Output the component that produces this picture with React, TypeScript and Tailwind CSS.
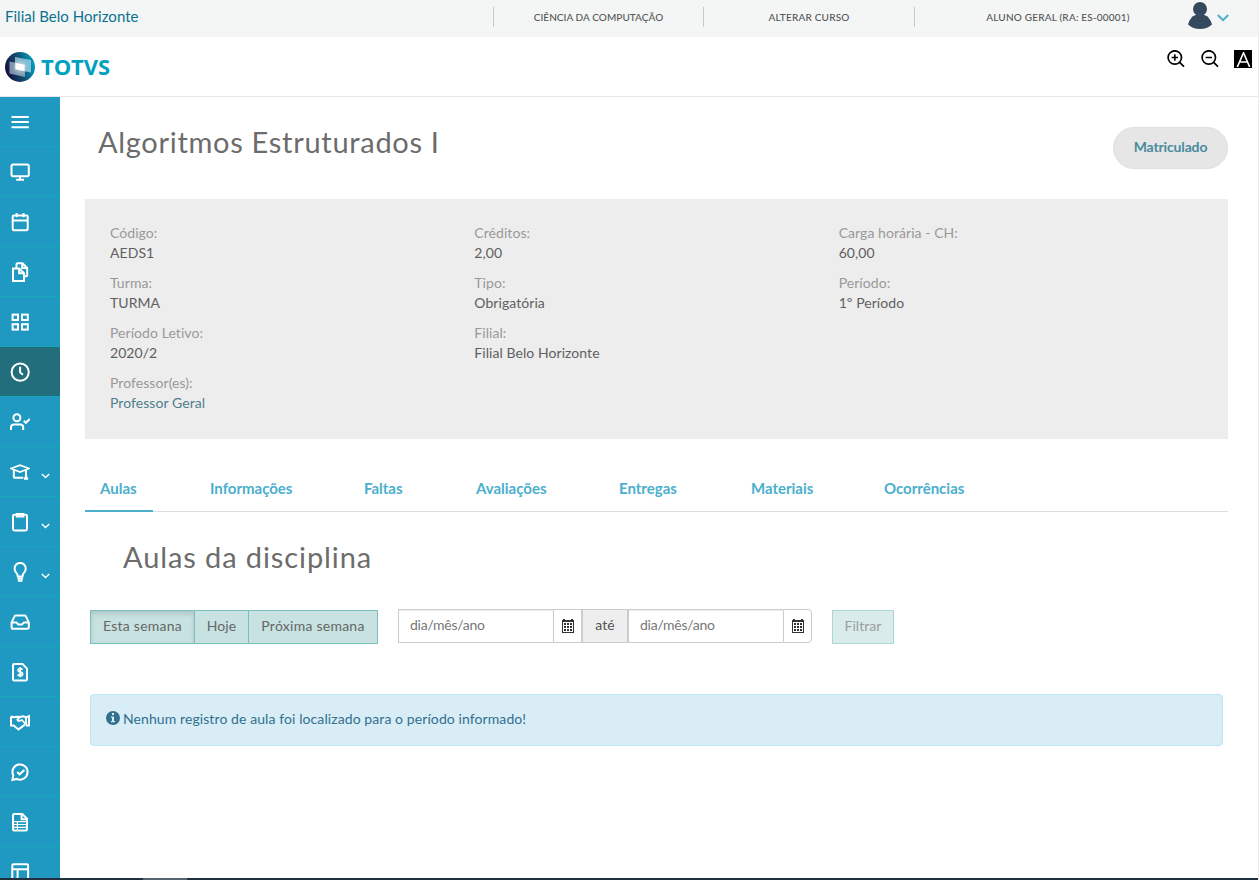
import { useState } from 'react';
import type { ReactNode } from 'react';

type MenuItem = { id: string; icon: ReactNode; expandable?: boolean };

const menuItems: MenuItem[] = [
  { id: 'menu', icon: <path d="M1.5 5h17.3M1.5 10h17.3M1.5 15.2h17.3" /> },
  {
    id: 'mural',
    icon: (
      <>
        <rect x="1.5" y="2.6" width="17.3" height="11.6" rx="1.6" />
        <path d="M10 14v3M6.2 17.7h7.8" />
      </>
    ),
  },
  {
    id: 'calendar',
    icon: (
      <>
        <rect x="2.7" y="3.4" width="15" height="14.8" rx="1.2" />
        <path d="M2.7 8.4h15M6.7 1v4.2M13.5 1v4.2" />
      </>
    ),
  },
  {
    id: 'files',
    icon: (
      <>
        <path d="M3 6.5h6.2l4.8 4.6v7.8H3z" />
        <path d="M9.2 6.5v4.8h4.8M6.5 6.2V2.2q0-1 1-1h5l4.700 4.600v7.400q0 1-1 1h-2M12.200 1.400v4.600h4.800" />
      </>
    ),
  },
  {
    id: 'grid',
    icon: (
      <>
        <rect x="2.6" y="2.6" width="5.4" height="5.4" />
        <rect x="12" y="2.6" width="5.8" height="5.4" />
        <rect x="2.6" y="12.2" width="5.4" height="5.4" />
        <rect x="12" y="12.2" width="5.8" height="5.4" />
      </>
    ),
  },
  {
    id: 'clock',
    icon: (
      <>
        <circle cx="10.2" cy="10.1" r="8.6" />
        <path d="M10.1 4.8v5.6l2.8 2.4" />
      </>
    ),
  },
  {
    id: 'attendance',
    icon: (
      <>
        <circle cx="6.9" cy="5.8" r="3.5" />
        <path d="M1 18v-2.6q0-2.8 2.8-2.8h6.6q2.8 0 2.8 2.8V18M13.8 8.8l2 2 4-3.8" />
      </>
    ),
  },
  {
    id: 'academic',
    expandable: true,
    icon: (
      <>
        <path d="M1 6.500 10 3.200l9 3.300L10 10z" strokeWidth="1.800" />
        <path d="M3.800 8v6.400q0 1.400 1.600 1.400h8M16 7.600v7" />
        <path d="M14 16.600h4.200M16 13.600v3" strokeWidth="2.400" />
      </>
    ),
  },
  {
    id: 'clipboard',
    expandable: true,
    icon: (
      <>
        <rect x="3" y="2.8" width="14" height="15.6" rx="1.4" />
        <path d="M6.8 2v2.400h6.600V2z" />
      </>
    ),
  },
  {
    id: 'ideas',
    expandable: true,
    icon: (
      <>
        <path d="M7.800 14.400q0-2.200-1.800-4Q4.600 8.800 4.600 6.500A5.500 5.500 0 0 1 15.700 6.500q0 2.300-1.400 3.900-1.800 1.800-1.800 4z" />
        <path d="M7.400 16.600h5.600M7.900 18.800h4.600" />
      </>
    ),
  },
  {
    id: 'inbox',
    icon: (
      <>
        <path d="M1.600 10.400 4.500 4.400q.4-.9 1.300-.9h8.800q.9 0 1.300.9l2.900 6v5q0 1.400-1.400 1.400H3q-1.400 0-1.400-1.400z" />
        <path d="M1.600 10.400h4.800l1.800 2h3.900l1.800-2h4.900" />
      </>
    ),
  },
  {
    id: 'finance',
    icon: (
      <>
        <path d="M4.200 2h8.300l4.500 4.600v10.600q0 1.300-1.300 1.300H4.200q-1.200 0-1.200-1.300V3.200Q3 2 4.200 2z" />
        <path d="M12.500 7.600q-.6-1-2.300-1-2.200 0-2.200 1.700 0 1.400 2.200 1.800 2.400.4 2.400 1.900 0 1.700-2.300 1.700-1.900 0-2.700-1.200M10.200 5v10.200" strokeWidth="1.700" />
      </>
    ),
  },
  {
    id: 'agreements',
    icon: (
      <>
        <path d="M1 4.500l3 .8 3-.6 3 .2 3-.6 3.200 1L19 4v9.400h-3M1 4.500v8.900h2.600l4.900 4 6.400-4.800M16 5.300v7.300" />
        <path d="M10.200 5 7.200 7.800q.8 1.900 3 1l1.600-.9 4.300 4.500" strokeWidth="1.600" />
      </>
    ),
  },
  {
    id: 'services',
    icon: (
      <>
        <path d="M2.400 17.900 3.300 13.600A7.600 7.600 0 1 1 6.800 16.900z" />
        <path d="M7.200 10l2.400 2.300 4.800-4.400" />
      </>
    ),
  },
  {
    id: 'reports',
    icon: (
      <>
        <path d="M4.200 2h8l4.800 4.600v10.600q0 1.300-1.300 1.300H4.200q-1.200 0-1.200-1.300V3.200Q3 2 4.200 2z" />
        <path d="M11.600 2v5.200H17" />
        <path d="M4 9.700h12M4 12.500h12M4 15.300h12M7.400 9v8.600" strokeWidth="1.200" />
      </>
    ),
  },
  {
    id: 'layout',
    icon: (
      <>
        <rect x="2.300" y="2.300" width="15.800" height="15.800" rx="1.200" />
        <path d="M2.300 7.200h15.800M7.600 7.200v10.900" />
      </>
    ),
  },
];

const tabs = [
  { label: 'Aulas', width: 'w-[110px]' },
  { label: 'Informações', width: 'w-[154px]' },
  { label: 'Faltas', width: 'w-[112px]' },
  { label: 'Avaliações', width: 'w-[143px]' },
  { label: 'Entregas', width: 'w-[132px]' },
  { label: 'Materiais', width: 'w-[133px]' },
  { label: 'Ocorrências', width: 'w-[110px]' },
];

const infoColumns = [
  [
    ['Código:', 'AEDS1'],
    ['Turma:', 'TURMA'],
    ['Período Letivo:', '2020/2'],
    ['Professor(es):', 'Professor Geral'],
  ],
  [
    ['Créditos:', '2,00'],
    ['Tipo:', 'Obrigatória'],
    ['Filial:', 'Filial Belo Horizonte'],
  ],
  [
    ['Carga horária - CH:', '60,00'],
    ['Período:', '1º Período'],
  ],
];

function Logo() {
  return (
    <svg className="h-[30px] w-[30px]" viewBox="0 0 30 30">
      <defs>
        <linearGradient id="ball" x1="0" y1="0.6" x2="1" y2="0.3">
          <stop offset="0" stopColor="#150f3c" />
          <stop offset="0.45" stopColor="#14466b" />
          <stop offset="1" stopColor="#00a5c4" />
        </linearGradient>
        <radialGradient id="glow" cx="0.5" cy="0.5" r="0.5">
          <stop offset="0" stopColor="#fff" />
          <stop offset="1" stopColor="#fff" stopOpacity="0" />
        </radialGradient>
      </defs>
      <circle cx="15" cy="15" r="15" fill="url(#ball)" />
      <path d="M10 5 26 8V20.500L10 17.500z" fill="#b5dcea" opacity="0.7" />
      <path d="M4.500 9.500 20 12.500V25L4.500 21.500z" fill="#b9c8dc" opacity="0.65" />
      <path d="M10.500 11 19.500 12.800V19L10.500 17.200z" fill="#fff" />
      <circle cx="15" cy="15" r="8" fill="url(#glow)" opacity="0.6" />
    </svg>
  );
}

function ZoomIcon({ plus }: { plus?: boolean }) {
  return (
    <svg className="h-[18px] w-[18px]" viewBox="0 0 18 18" fill="none" stroke="#000" strokeWidth="1.7">
      <circle cx="7.800" cy="7.500" r="6.700" />
      <path d="M12.600 12.300 17 16.700M4.600 7.500h6.400" />
      {plus && <path d="M7.800 4.300v6.400" />}
    </svg>
  );
}

function CalendarButton({ last }: { last?: boolean }) {
  return (
    <button
      className={
        'flex h-[34px] w-[29px] items-center justify-center border border-[#ccc] bg-white ' +
        (last ? 'rounded-r' : '')
      }
    >
      <svg className="h-[14px] w-3" viewBox="0 0 12 14" shapeRendering="crispEdges">
        <path d="M0 1h1V0h2v1h6V0h2v1h1v13H0z" fill="#333" />
        <path d="M1 3h10v10H1z" fill="#fff" />
        <path
          d="M2 4h2v2H2zM5 4h2v2H5zM8 4h2v2H8zM2 7h2v2H2zM5 7h2v2H5zM8 7h2v2H8zM2 10h2v2H2zM5 10h2v2H5zM8 10h2v2H8z"
          fill="#333"
        />
      </svg>
    </button>
  );
}

export default function App() {
  const [activeTab, setActiveTab] = useState('Aulas');

  return (
    <div className="flex h-[880px] flex-col overflow-hidden border-r border-[#ececec] bg-white font-['Lato',sans-serif] text-sm tracking-[0.06px] text-[#666]">
      {/* Top bar */}
      <div className="flex h-[37px] shrink-0 items-start bg-[#f4f6f6]">
        <div className="w-[493px] pt-1 pl-[5px] text-[15px] leading-6 tracking-[0.03px] text-[#0c7190]">Filial Belo Horizonte</div>
        <div className="flex pt-[7px] text-center text-[10px] leading-5 font-medium text-[#555]">
          <div className="w-[210px] border-l border-[#c8c8c8]">CIÊNCIA DA COMPUTAÇÃO</div>
          <div className="w-[211px] border-l border-[#c8c8c8] tracking-[0.2px]">ALTERAR CURSO</div>
          <div className="w-[274px] border-l border-[#c8c8c8] pl-[13px] tracking-[0.2px]">ALUNO GERAL (RA: ES-00001)</div>
        </div>
        <div className="flex items-center pt-[2px]">
          <svg className="h-[27px] w-6" viewBox="0 0 24 27" fill="#34495e">
            <circle cx="12" cy="7" r="7" />
            <path d="M0 22.500Q2 15 7.500 13h9Q22 15 24 22.500 19 27 12 27T0 22.500z" />
          </svg>
          <svg className="mt-1 ml-[5px] h-2 w-3" viewBox="0 0 12 8" fill="none" stroke="#4bafcd" strokeWidth="2">
            <path d="M.8 1 6 6.200 11.200 1" />
          </svg>
        </div>
      </div>

      {/* Header */}
      <header className="flex h-[60px] shrink-0 justify-between border-b border-[#e7e7e7] pl-[5px]">
        <div className="flex items-center gap-1.5">
          <Logo />
          <span className="font-['Open_Sans',sans-serif] text-[22px] font-bold tracking-[-0.1px] text-[#00a1bf]">TOTVS</span>
        </div>
        <div className="flex items-start pt-[13px] pr-[6px]">
          <div className="mr-4"><ZoomIcon plus /></div>
          <div className="mr-[15px]"><ZoomIcon /></div>
          <div className="flex h-[18px] w-[18px] items-center justify-center bg-black">
            <svg className="h-[15px] w-[15px]" viewBox="0 0 15 15" fill="none" stroke="#fff" strokeWidth="1.600">
              <path d="M1.300 15 7.500.8 13.700 15M3.500 10h8" />
            </svg>
          </div>
        </div>
      </header>

      <div className="flex min-h-0 flex-1">
        {/* Side menu */}
        <nav className="w-[60px] shrink-0 overflow-hidden bg-[#1f99c1]">
          {menuItems.map((item) => (
            <button
              key={item.id}
              className={
                'flex h-[50px] w-full items-center border-b border-[#18a6b9] pl-[10px] ' +
                (item.id === 'clock' ? 'bg-[#226e7d]' : '')
              }
            >
              <svg className="h-5 w-5 shrink-0" viewBox="0 0 20 20" fill="none" stroke="#fff" strokeWidth="2">
                {item.icon}
              </svg>
              {item.expandable && (
                <svg className="mt-2 ml-[11px] h-[6px] w-[9px]" viewBox="0 0 9 6" fill="none" stroke="#fff" strokeWidth="1.500">
                  <path d="M.8 1 4.500 4.500 8.200 1" />
                </svg>
              )}
            </button>
          ))}
        </nav>

        {/* Content */}
        <main className="flex-1 pr-[30px] pl-[25px]">
          <div className="flex h-[102px] justify-between pt-[30px]">
            <h1 className="-mt-[5px] pl-[13px] text-[29px] leading-10 tracking-[0.7px] text-[#6c6c6c]">Algoritmos Estruturados I</h1>
            <span className="h-[42px] w-[115px] rounded-full border border-[#e0e0e0] bg-[#e6e6e6] text-center leading-[38px] font-bold tracking-[-0.15px] text-[#4a8ba0]">
              Matriculado
            </span>
          </div>

          <section className="grid h-[240px] grid-cols-3 bg-[#ededed] px-[25px] pt-[24px] leading-5">
            {infoColumns.map((column, i) => (
              <dl key={i}>
                {column.map(([label, value]) => (
                  <div key={label} className="mb-[10px]">
                    <dt className="text-[#999]">{label}</dt>
                    <dd className={value === 'Professor Geral' ? 'text-[#4d7f8c]' : 'text-[#606060]'}>{value}</dd>
                  </div>
                ))}
              </dl>
            ))}
          </section>

          {/* Tabs */}
          <div className="mt-[28px] flex h-[45px] border-b border-[#ddd]">
            {tabs.map((tab) => (
              <div key={tab.label} className={'shrink-0 ' + tab.width}>
                <button
                  onClick={() => setActiveTab(tab.label)}
                  className={
                    'h-[45px] min-w-[68px] border-b-2 px-[15px] pb-px text-left text-[15px] leading-[42px] font-bold tracking-[-0.01px] whitespace-nowrap text-[#4bafcd] ' +
                    (activeTab === tab.label ? 'border-[#4bafcd]' : 'border-transparent')
                  }
                >
                  {tab.label}
                </button>
              </div>
            ))}
          </div>

          <h2 className="mt-[25px] pl-[38px] text-[29px] leading-10 tracking-[0.9px] text-[#6c6c6c]">Aulas da disciplina</h2>

          {/* Filters */}
          <div className="mt-[32px] ml-[5px] flex">
            <div className="mt-px flex h-[34px] border border-[#7bbfbc] bg-[#c7e2e1] leading-[30px]">
              <button className="w-[103px] pb-0.5 tracking-[0.25px] shadow-[inset_0_3px_5px_rgba(0,0,0,0.125)]">Esta semana</button>
              <button className="w-[54px] border-l border-[#7bbfbc] pb-0.5">Hoje</button>
              <button className="w-[129px] border-l border-[#7bbfbc] pb-0.5 tracking-[0.25px]">Próxima semana</button>
            </div>
            <div className="ml-5 flex h-[34px]">
              <input
                placeholder="dia/mês/ano"
                className="w-[155px] border border-r-0 border-[#ccc] pb-0.5 pl-[11px] tracking-[-0.25px] shadow-[inset_0_1px_1px_rgba(0,0,0,0.075)] placeholder:text-[#777]"
              />
              <CalendarButton />
              <span className="w-[47px] border-y border-r-2 border-l border-[#ccc] bg-[#eee] text-center leading-[30px] text-[#555]">até</span>
              <input
                placeholder="dia/mês/ano"
                className="w-[154px] border border-r-0 border-l-0 border-[#ccc] pb-0.5 pl-[11px] tracking-[-0.25px] shadow-[inset_0_1px_1px_rgba(0,0,0,0.075)] placeholder:text-[#777]"
              />
              <CalendarButton last />
            </div>
            <button className="mt-px ml-5 h-[34px] w-[62px] border border-[#abd8d5] bg-[#d9ebea] pb-0.5 text-[#9b9f9f]">Filtrar</button>
          </div>

          {/* Alert */}
          <div className="mt-[50px] mr-[5px] ml-[5px] flex h-[52px] items-center rounded border border-[#bce8f1] bg-[#d9edf7] pb-[3px] pl-[15px] tracking-[0.09px] text-[#31708f]">
            <svg className="mr-[3px] mb-px h-[14px] w-[14px]" viewBox="0 0 14 14">
              <circle cx="7" cy="7" r="7" fill="#31708f" />
              <path d="M6 2h2v2H6zM5 5.500h3V10h1v1.200H5V10h1V6.700H5z" fill="#d9edf7" />
            </svg>
            Nenhum registro de aula foi localizado para o período informado!
          </div>
        </main>
      </div>

      <footer className="flex h-[2px] shrink-0 bg-[#20313d] pl-[143px]">
        <div className="w-[44px] bg-[#566570]" />
      </footer>
    </div>
  );
}
